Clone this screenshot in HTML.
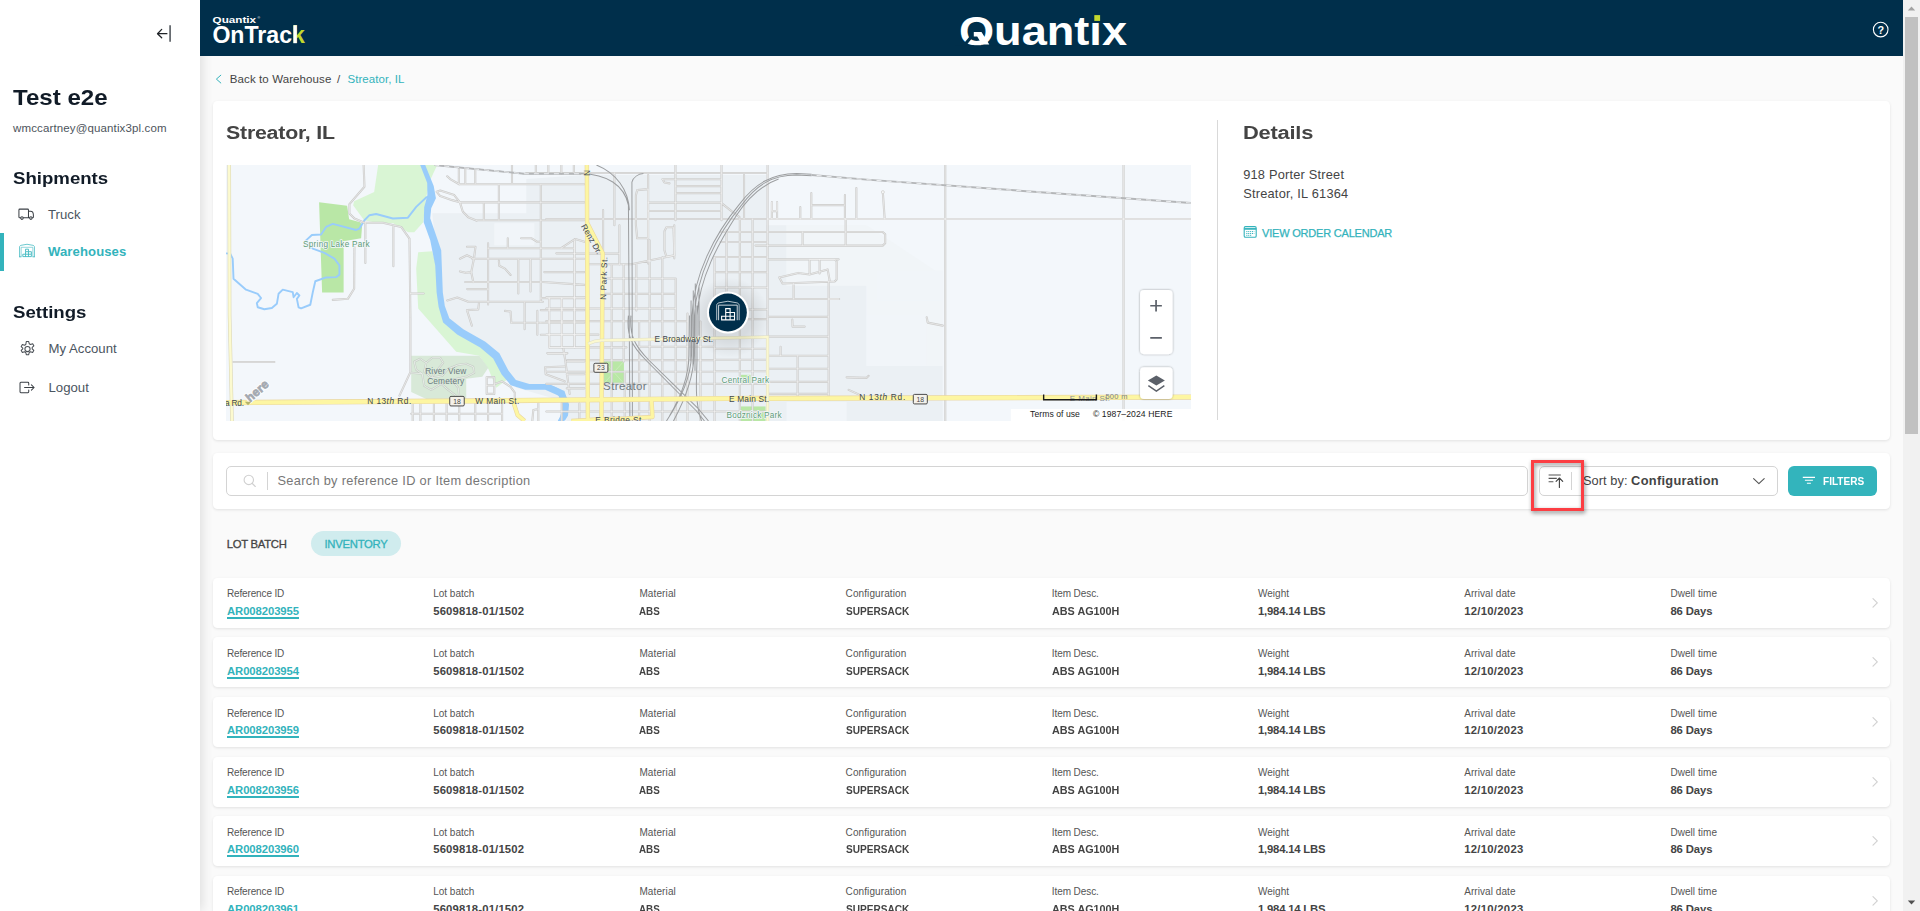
<!DOCTYPE html>
<html lang="en">
<head>
<meta charset="utf-8">
<title>Quantix OnTrack - Streator, IL</title>
<style>
*{box-sizing:border-box;margin:0;padding:0}
html,body{width:1920px;height:911px;overflow:hidden;background:#fafafa}
body{position:relative;font-family:"Liberation Sans",sans-serif;color:#444;font-size:11.2px}
.abs{position:absolute;white-space:nowrap;line-height:1}
a{color:inherit}
/* sidebar */
#side{position:absolute;left:0;top:0;width:200px;height:911px;background:#fff;box-shadow:2px 0 11px rgba(0,0,0,.12);z-index:5}
.h{font-weight:700;color:#111b27;letter-spacing:-.2px}
.nav{color:#4b5560;font-size:13.2px}
/* header */
#top{position:absolute;left:200px;top:0;width:1703px;height:56px;background:#002f4b;z-index:6}
/* scrollbar */
#sb{position:absolute;left:1903px;top:0;width:17px;height:911px;background:#f1f1f1;z-index:6}
#sb .thumb{position:absolute;left:2px;top:17px;width:13px;height:417px;background:#c1c1c1}
.card{position:absolute;background:#fff;border-radius:4.500px;box-shadow:0 1px 3px rgba(0,0,0,.10)}
.t{font-weight:700;color:#444;font-size:19.2px;letter-spacing:-.2px}
.teal{color:#33b3bc}
/* rows */
.row{position:absolute;left:213px;width:1677px;height:50px;background:#fff;border-radius:4.500px;box-shadow:0 1px 3px rgba(0,0,0,.10)}
.row .l{position:absolute;top:10.8px;font-size:10px;color:#555;white-space:nowrap;line-height:12px;letter-spacing:-.15px}
.row .v{position:absolute;top:26.4px;font-size:11.3px;font-weight:700;color:#444;white-space:nowrap;line-height:14px}
.row .v.k{color:#33b3bc;text-decoration:underline;text-decoration-thickness:1.6px;text-underline-offset:1.5px}
.row svg{position:absolute;left:1657px;top:18px}

.row .l.c0{letter-spacing:-.15px}.row .l.c1{letter-spacing:0}.row .l.c2{letter-spacing:.12px}.row .l.c3{letter-spacing:.1px}.row .l.c4{letter-spacing:-.08px}.row .l.c5{letter-spacing:.02px}.row .l.c6{letter-spacing:.07px}.row .l.c7{letter-spacing:.05px}
.row .v{transform-origin:0 0}
.row .v.c0{letter-spacing:-.08px}.row .v.c1{letter-spacing:.16px}.row .v.c2{transform:scaleX(.87)}.row .v.c3{transform:scaleX(.894)}.row .v.c4{transform:scaleX(.956)}.row .v.c5{letter-spacing:-.2px}.row .v.c6{letter-spacing:.28px}.row .v.c7{letter-spacing:-.1px}
</style>
</head>
<body>
<div id="side">
<svg class="abs" style="left:155px;top:24px" width="18" height="20" viewBox="0 0 18 20"><path d="M11.9 9.7H2.6M6.7 5.4L2.5 9.7l4.2 4.1" fill="none" stroke="#1f2327" stroke-width="1.25" stroke-linecap="round" stroke-linejoin="round"/><path d="M15.1 1.3v16.5" stroke="#676c71" stroke-width="1.8"/></svg>
<div class="abs h" id="s_name" style="left:13px;top:87px;font-size:21.6px;letter-spacing:0;transform-origin:0 0;transform:scaleX(1.115)">Test e2e</div>
<div class="abs" id="s_mail" style="left:13px;top:122.5px;font-size:11.5px;color:#4d545c;letter-spacing:.13px">wmccartney@quantix3pl.com</div>
<div class="abs h" id="s_ship" style="left:13px;top:169.800px;font-size:16.2px;letter-spacing:0;transform-origin:0 0;transform:scaleX(1.15)">Shipments</div>
<svg class="abs" style="left:18.300px;top:207.700px" width="16.700" height="13" viewBox="0 0 18 14"><path d="M3 10.6H1.9a.9.9 0 0 1-.9-.9V2.1a.9.9 0 0 1 .9-.9h8.5a.9.9 0 0 1 .9.9v8.5H5.6M11.3 3.4h2.2c1.800 0 3.100 2 3.100 4.200v2.100a.9.9 0 0 1-.9.900h-.6M11.300 10.600h1.300" fill="none" stroke="#3a3f45" stroke-width="1.1" stroke-linecap="round" stroke-linejoin="round"/><circle cx="4.300" cy="10.900" r="1.350" fill="#fff" stroke="#3a3f45" stroke-width="1.100"/><circle cx="13.900" cy="10.900" r="1.350" fill="#fff" stroke="#3a3f45" stroke-width="1.100"/></svg>
<div class="abs nav" id="s_truck" style="left:48px;top:207.500px">Truck</div>
<div class="abs" style="left:0;top:233px;width:4px;height:38px;background:#33b3bc"></div>
<svg class="abs" style="left:17px;top:242px" width="20" height="18" viewBox="0 0 20 18"><g fill="none" stroke="#3fb8c0" transform="translate(10,9.700) scale(.665)"><path d="M-11.200 7.700V-7c0-1.500 1-2.300 2.300-2.600L0-11.200l8.900 1.600c1.300.3 2.300 1.100 2.300 2.600V7.700" stroke-width="1.350" stroke-opacity=".85"/><path d="M-8.800 7.700V-6.600h17.600v14.300" stroke-width="1.200" stroke-opacity=".7"/><path d="M-2.200-3.800h4.400v3.800h-4.400zM-2.200 0v3.800M2.200 0h4.400v3.800M2.200 0v7.400M-6.300 7.400v-3.600h12.900v3.600zM-2.200 3.800v3.600" stroke-width="1.350"/><path d="M-12 7.700h3.600M8.400 7.700h3.600" stroke-width="1.350"/></g></svg>
<div class="abs" id="s_wh" style="left:48px;top:244.500px;font-size:13.1px;font-weight:700;color:#33b3bc;letter-spacing:.1px">Warehouses</div>
<div class="abs h" id="s_set" style="left:13px;top:303.5px;font-size:16.2px;letter-spacing:0;transform-origin:0 0;transform:scaleX(1.15)">Settings</div>
<svg class="abs" style="left:19px;top:340px" width="17" height="18" viewBox="0 0 17 18"><g fill="none" stroke="#4a4f55" stroke-width="1.050" stroke-linejoin="round"><circle cx="8.500" cy="9" r="2.600"/><path d="M7.300 1.500h2.400l.5 2.200 1.300.75 2.150-.7 1.200 2.100-1.650 1.500v1.500l1.650 1.500-1.200 2.100-2.150-.7-1.300.75-.5 2.200H7.300l-.5-2.200-1.300-.75-2.150.7-1.200-2.100 1.650-1.500V8.150L2.150 6.650l1.200-2.100 2.150.7 1.300-.75z"/></g></svg>
<div class="abs nav" id="s_acct" style="left:48.500px;top:341.500px">My Account</div>
<svg class="abs" style="left:18.500px;top:380.600px" width="16.700" height="13" viewBox="0 0 18 14"><g fill="none" stroke="#3a3f45" stroke-width="1.100" stroke-linecap="round" stroke-linejoin="round"><path d="M10.500 4.200V2.300a.9.900 0 0 0-.9-.9H2a.900.900 0 0 0-.9.900v9.400a.900.900 0 0 0 .9.900h7.600a.900.900 0 0 0 .9-.9V9.800"/><path d="M6 7h10.300M13.400 4.100L16.300 7l-2.900 2.900"/></g></svg>
<div class="abs nav" id="s_out" style="left:48.500px;top:380.500px">Logout</div>
</div>
<div id="top">
<svg class="abs" style="left:0;top:0" width="1703" height="56" viewBox="200 0 1703 56" font-family="Liberation Sans, sans-serif" font-weight="700" fill="#fff">
<text x="212.600" y="23.100" font-size="9.800" textLength="43.500" lengthAdjust="spacingAndGlyphs">Quantix</text>
<text x="257.600" y="18.500" font-size="3.500" font-weight="400">®</text>
<text x="212.400" y="43.100" font-size="23.300" textLength="92.500" lengthAdjust="spacingAndGlyphs">OnTrac<tspan fill="#c3d82e">k</tspan></text>
<rect x="293.300" y="25.200" width="3.500" height="18" fill="#fff"/>
<text x="959" y="44.500" font-size="40.500" textLength="168" lengthAdjust="spacingAndGlyphs">Quantix</text>
<rect x="955" y="45.200" width="50" height="10" fill="#002f4b"/>
<path d="M971.500 36.500l-9 11" stroke="#002f4b" stroke-width="3"/><path d="M973.800 32h7.700l7.800 12.500h-7.300l-4.800-8h-3.400z" fill="#fff"/>
<rect x="1091.200" y="13.500" width="10.500" height="8.800" fill="#002f4b"/>
<rect x="1094.300" y="15.100" width="5.800" height="5.800" fill="#c3d82e"/>
<circle cx="1880.700" cy="29.600" r="7.300" fill="none" stroke="#fff" stroke-width="1.100"/>
<text x="1877.600" y="33.600" font-size="10.800" fill="#fff">?</text>
</svg>
</div>
<div id="main">
<svg class="abs" style="left:214px;top:73px" width="10" height="12" viewBox="0 0 10 12"><path d="M6.800 2.200L2.400 6.100l4.400 3.900" fill="none" stroke="#33b3bc" stroke-width="1" stroke-linecap="round" stroke-linejoin="round"/></svg>
<div class="abs" id="bc1" style="left:229.800px;top:73.600px;font-size:11.500px;color:#444;letter-spacing:.1px">Back to Warehouse</div>
<div class="abs" id="bc2" style="left:337px;top:73.600px;font-size:11.500px;color:#444">/</div>
<div class="abs teal" id="bc3" style="left:347.500px;top:73.600px;font-size:11.500px;letter-spacing:.05px">Streator, IL</div>

<div class="card" style="left:213px;top:101px;width:1677px;height:338.500px"></div>
<div class="abs t" id="t1" style="left:226px;top:123px;transform-origin:0 0;transform:scaleX(1.112)">Streator, IL</div>
<div id="map" style="position:absolute;left:226px;top:165px;width:965px;height:256px;background:#f3f7fb;overflow:hidden">
<!--MAPSTART--><svg width="965" height="256" viewBox="0 0 964 255" preserveAspectRatio="none" style="position:absolute;left:0;top:0" font-family="Liberation Sans, sans-serif">
<rect width="964" height="255" fill="#f3f7fb"/>
<path d="M206 48 L300 48 L300 14 L358 10 L540 10 L540 60 L560 60 L560 120 L640 120 L640 200 L716 200 L716 255 L340 255 L340 236 L290 222 L272 196 L222 158 L214 120Z" fill="#ebf0f4"/>
<path d="M541 60 L640 60 L716 110 L716 200 L640 200 L640 120 L560 120 L560 60Z" fill="#f1f5f8"/>
<rect x="268" y="58" width="40" height="22" fill="#f1f5f9"/>
<rect x="640" y="150" width="60" height="50" fill="#f1f5f9"/>
<rect x="560" y="236" width="60" height="19" fill="#f1f5f9"/>
<rect x="650" y="105" width="66" height="30" fill="#f1f5f9"/>
<path d="M152 0 L148 27 L128 36 L127 40 L138 55 L150 57.5 L167 58 L182 67 L188 67 L197 57 L200 32 L204 15 L211 0Z" fill="#d9f5d4"/>
<path d="M192 87 L206 86 L212 108 L214 130 L221 157 L236 168 L258 181 L271 191 L279 207 L283 212 L270 222 L262 203 L253 190 L230 186 L192 143 L190 103Z" fill="#d9f5d4"/>
<path d="M93 37 L121 40.5 L123 54 L134 57 L136 60 L135 73 L117.5 76 L117.5 127 L96 127Z" fill="#b9e7a6"/>
<path d="M185 190 L253 190 L262 202 L256 211 L240 213 L240 233 L200 233 L185 226Z" fill="#d8e9d8"/>
<rect x="377.5" y="195.5" width="20" height="21.5" fill="#b9e7a6"/>
<rect x="514" y="209" width="10" height="10" fill="#b9e7a6"/>
<rect x="514" y="240.5" width="25" height="14.5" fill="#b9e7a6"/>
<path d="M378 196l19 21M397 196l-19 21" stroke="#cfeec2" stroke-width=".7"/>
<path d="M194 0 L201 18 L201.2 30 L198 42 L197.5 57 L204 75 L209 100 L210.4 127 L212.4 141.5 L216.9 156.8 L230.9 168.8 L253.9 181.8 L266.9 192.8 L275.4 208.8 L284.4 219.3 L298.9 223.8 L318.9 223.8 L332.3 229.9 L335.8 240.4 L334.8 249.4 L331.3 255.4 L338.7 254.5 L341.7 249.5 L342.7 238.5 L338.1 225.1 L322.6 218.1 L303.1 218.1 L289.6 214.1 L282.1 204.6 L273.1 187.6 L259.1 176.1 L237.1 163.6 L223.1 152.6 L218.6 140.5 L216.6 127 L215 85 L204 53 L205 43 L209.7 33 L207.5 21 L199 0Z" fill="#99ccfb"/>
<path d="M320 219.500c8 0 20 5 21.500 17 .8 7-1 13-4 18.500h-6c3-5 4.500-11 4-17-1-9-8-14-15.500-14.500z" fill="#99ccfb"/>
<path d="M200.8 31.7 L190 41.7 L181.7 52.5 L166.7 53.3 L150 48.8 L143.3 50 L138.3 55 L133.3 63.3 L130 64.7 L106.7 58.7 L100 61.7 L95 69.2 L85.8 69.7 L79.7 75.3 L86.7 83.3 L98.3 87.5 L108.3 93.3 L113.3 100 L113.3 109.2 L110 111.7 L100 112 L89.2 115.8 L86.7 126.7 L84.2 139.2 L75 142.8 L72.5 141.7 L70.8 133.3 L73.3 130 L70.8 127.5 L67.5 131.7 L66.7 126.7 L56.7 124.2 L52.5 128.3 L50.8 138.3 L45.8 142.5 L38.3 143.7 L31.7 141.7 L30.8 137.5 L35 132.5 L31.7 128.3 L20 124.2 L7.5 113.3 L6.7 93.3 L4.2 88.3 L0 88" fill="none" stroke="#99ccfb" stroke-width="1.900" stroke-linejoin="round"/>
<path d="M137.5 0 L138.3 21.7 L123.3 39 L123.3 48.3 L128.3 53.3 L138.3 57.5 L156.7 57.5 L175 61.7 L183.3 73.3 L184.2 152 L184.2 206.3 L173.3 229.7 M139.2 57.5 L139.2 97.5 M167.2 60.8 L167.2 100.8 M128.3 81.7 L128 123.3 L121.7 133.3 L106.7 134.3 M184.2 128 L197.5 128 M7.5 196.3 L48.3 196.3 M233 19.2 L358 19.2 M233.7 37.2 L358 37.2 M250.6 55 L358 55 M261.8 82.9 L347.5 82.9 M246 93.4 L358 93.4 M318 106.7 L358 106.7 M239 116.6 L316.6 116.6 L358 119.4 M241 123.6 L262 123.6 M232.6 4 L232.6 18.5 M239 4 L239 18.5 M249 4 L249 18.5 M285.7 0 L285.7 18.5 M309.5 0 L309.5 8.5 M322 0 L322 8.5 M335 0 L335 8.5 M347.5 0 L347.5 8.5 M272.6 19.7 L272.6 54.8 M257.6 38 L257.6 54.8 M314.5 19.7 L314.5 136.2 M261.8 78 L261.8 139 M292 94 L292 128 M304.2 94 L304.2 126 M348.2 76 L348.2 182 M221 11.2 L224 14 L233 19.2 M210.5 26.7 L214 25.5 L228 30 L233.7 37.2 L226 35 L214 31 L210.5 26.7 M233.7 37.2 L236.5 46.3 L242 52 L250.6 55.5 M281.5 73 L281.5 82.9 M294.8 73 L305.3 73 L311 76.5 L314.5 76.5 M334.8 82.9 L348.9 73.7 L358 76.5 M330 88 L348.2 88 M240.7 81.5 L249.2 81.5 L247.8 92.7 L245 106.7 L247 116.6 M233.7 93.4 L240.7 89.9 L246.3 92.7 M233.7 106 L239.3 107.4 L245 106.7 M272.6 95.5 L273 100.4 L278.7 103.2 L284.3 109.5 M221 135 L231 132 L242 136.2 L316.6 136.2 M322.9 132.6 L322.9 182 M335.5 132.6 L335.5 182 M314.5 132.6 L358 132.6 M314.5 144.6 L358 144.6 M314.5 157.2 L358 157.2 M314.5 169.1 L358 169.1 M324 181.8 L358 181.8 M311 145.3 L311 169.1 M298.3 136.8 L298.3 163.5 M285 157.2 L314.5 157.2 M278.7 145.3 L284.3 146 L285 157.2 M240.7 144.6 L252 143.9 L252.7 137.5 M240.7 144.6 L245.6 160 M321.5 188 L340.4 188 M337 183 L339 195 L343.3 228 M340.4 195.8 L358 195.8 M340.4 208.5 L358 208.5 M340.4 222.5 L358 222.5 M338.3 200.7 L318.7 201.4 L319.4 208.5 L338.3 215.5 M260.4 211.3 L268 211.3 L268 228 L260.4 228 L260.4 211.3 M260.4 219.5 L268 219.5 M268 218.3 L275.8 215.5 L284.3 221 L288.5 226.7 L288.5 233 M185 247.8 L275.8 247.8 M186.5 237.5 L186.5 255 M194.2 237.5 L194.2 255 M207.7 237.5 L207.7 255 M220.4 237.5 L220.4 255 M233 237.5 L233 255 M249 237.5 L249 255 M261.8 237.5 L261.8 255 M275.8 237.5 L275.8 255 M312 237.5 L312 255 M353 237.5 L353 255 M306 255 L307 244 L312 243 M348 88.3 L393 88.3 M320 131.9 L359 131.9 M320 142.9 L449 142.9 M320 155.5 L461 155.5 M320 169 L372 169 M322.8 181.7 L400 181.7 M321 187.4 L341 187.4 M341 194.4 L487 194.4 M320 206 L487 206 M320 218 L487 218 M320 245.5 L487 245.5 M412 181 L487 181 M322.8 132.6 L322.8 181.7 M335.4 132.6 L335.4 182 M348 75 L348 181.7 M335.4 237 L335.4 255 M363 98.9 L405 98.9 L446 90.4 M379 113 L448 113 M379 128.4 L449 128.4 M385.3 100 L385.3 255 M397.2 99 L397.2 196 M409.9 99 L409.9 145 M412.7 155.5 L412.7 255 M423.2 75 L423.2 255 M435.9 92 L435.9 255 M449.2 113 L449.2 255 M447.8 60 L447.8 93 M461 148 L461 255 M393 60 L393 99 M398.3 206 L398.3 255 M474 156 L474 255 M300 8 L541 8 M320 53.8 L964 53.8 M388 8 L388 60 M376.7 45 L376.7 88 M421.7 10 L421.7 98 M449 0 L449 55 M410.8 25 L421.7 24 L421.7 73 L410.8 73 L409.5 60 L409.5 30 L410.8 25 M421.7 37.5 L495 37.5 M421.7 45.8 L495 45.8 M449 28 L495 28 M449 21 L495 21 M436 14.2 L495 14.2 M495 0 L495 55 M436 14.2 L438 17.5 L443 18.3 M440 62 L447 62 L448 90 L440 91.5 L438 85 L438 66 L440 62 M517.5 10 L517.5 53.8 M541 0 L541 255 M513.3 53.8 L513.3 255 M526 53.8 L526 255 M500 65 L500 130 M488 92 L488 255 M494 66.7 L541 66.7 M494 76.7 L541 76.7 M488 91.7 L541 91.7 M488 106.7 L541 106.7 M488 122 L541 122 M488 144 L541 144 M488 153.5 L541 153.5 M488 183 L541 183 M488 194 L541 194 M488 205.5 L541 205.5 M488 218 L541 218 M488 245.5 L541 245.5 M495 38 L505 46 L513 52 M541 53.8 L964 53.8 M545.3 37 L545.3 53.8 M550.5 37 L550.5 53.8 M573.7 42 L573.7 53.8 M584.7 28 L584.7 53.8 M618.3 30 L618.3 53.8 M629.7 23 L629.7 53.8 M545.3 37 L545.3 46 L550.5 46 L550.5 37 M585 40 L617.7 40 M541.7 66.7 L656 66.7 L658.5 69 L658.5 78 L656 80.3 L529 80.3 M576 66.7 L576 80 M619 53.8 L619 80 M541.7 94 L612 94 M552.7 112 L571.7 107.5 L583 109 L583 94 L608 94 L610 96 L610 114 L608 116 L556 118 L552.7 112 M583 109 L601 104 L603 115 M593 94 L593 108 M541.7 133.5 L612 133.5 M567 118 L567 133.5 M602 116 L602 232 M541.7 151.3 L602 151.3 M541.7 171 L602 171 M541.7 190 L602 190 M541.7 203 L602 203 M541.7 216 L602 216 M541.7 228 L602 228 M571 190 L571 231 M565.7 154 L566 161 L578 161 M554 181 L554 190 M620 211.5 L640 212 L642 210 M622 224 L632 228.5 M700 151.7 L701 157 L716 160 M602 133.5 L612.5 133.5 M718.5 0 L718.5 255 M896.6 0 L896.6 255 M656.2 28 L658 53.8" fill="none" stroke="#cbcbca" stroke-width="2.100" stroke-linejoin="round" stroke-linecap="round"/>
<path d="M137.5 0 L138.3 21.7 L123.3 39 L123.3 48.3 L128.3 53.3 L138.3 57.5 L156.7 57.5 L175 61.7 L183.3 73.3 L184.2 152 L184.2 206.3 L173.3 229.7 M139.2 57.5 L139.2 97.5 M167.2 60.8 L167.2 100.8 M128.3 81.7 L128 123.3 L121.7 133.3 L106.7 134.3 M184.2 128 L197.5 128 M7.5 196.3 L48.3 196.3 M233 19.2 L358 19.2 M233.7 37.2 L358 37.2 M250.6 55 L358 55 M261.8 82.9 L347.5 82.9 M246 93.4 L358 93.4 M318 106.7 L358 106.7 M239 116.6 L316.6 116.6 L358 119.4 M241 123.6 L262 123.6 M232.6 4 L232.6 18.5 M239 4 L239 18.5 M249 4 L249 18.5 M285.7 0 L285.7 18.5 M309.5 0 L309.5 8.5 M322 0 L322 8.5 M335 0 L335 8.5 M347.5 0 L347.5 8.5 M272.6 19.7 L272.6 54.8 M257.6 38 L257.6 54.8 M314.5 19.7 L314.5 136.2 M261.8 78 L261.8 139 M292 94 L292 128 M304.2 94 L304.2 126 M348.2 76 L348.2 182 M221 11.2 L224 14 L233 19.2 M210.5 26.7 L214 25.5 L228 30 L233.7 37.2 L226 35 L214 31 L210.5 26.7 M233.7 37.2 L236.5 46.3 L242 52 L250.6 55.5 M281.5 73 L281.5 82.9 M294.8 73 L305.3 73 L311 76.5 L314.5 76.5 M334.8 82.9 L348.9 73.7 L358 76.5 M330 88 L348.2 88 M240.7 81.5 L249.2 81.5 L247.8 92.7 L245 106.7 L247 116.6 M233.7 93.4 L240.7 89.9 L246.3 92.7 M233.7 106 L239.3 107.4 L245 106.7 M272.6 95.5 L273 100.4 L278.7 103.2 L284.3 109.5 M221 135 L231 132 L242 136.2 L316.6 136.2 M322.9 132.6 L322.9 182 M335.5 132.6 L335.5 182 M314.5 132.6 L358 132.6 M314.5 144.6 L358 144.6 M314.5 157.2 L358 157.2 M314.5 169.1 L358 169.1 M324 181.8 L358 181.8 M311 145.3 L311 169.1 M298.3 136.8 L298.3 163.5 M285 157.2 L314.5 157.2 M278.7 145.3 L284.3 146 L285 157.2 M240.7 144.6 L252 143.9 L252.7 137.5 M240.7 144.6 L245.6 160 M321.5 188 L340.4 188 M337 183 L339 195 L343.3 228 M340.4 195.8 L358 195.8 M340.4 208.5 L358 208.5 M340.4 222.5 L358 222.5 M338.3 200.7 L318.7 201.4 L319.4 208.5 L338.3 215.5 M260.4 211.3 L268 211.3 L268 228 L260.4 228 L260.4 211.3 M260.4 219.5 L268 219.5 M268 218.3 L275.8 215.5 L284.3 221 L288.5 226.7 L288.5 233 M185 247.8 L275.8 247.8 M186.5 237.5 L186.5 255 M194.2 237.5 L194.2 255 M207.7 237.5 L207.7 255 M220.4 237.5 L220.4 255 M233 237.5 L233 255 M249 237.5 L249 255 M261.8 237.5 L261.8 255 M275.8 237.5 L275.8 255 M312 237.5 L312 255 M353 237.5 L353 255 M306 255 L307 244 L312 243 M348 88.3 L393 88.3 M320 131.9 L359 131.9 M320 142.9 L449 142.9 M320 155.5 L461 155.5 M320 169 L372 169 M322.8 181.7 L400 181.7 M321 187.4 L341 187.4 M341 194.4 L487 194.4 M320 206 L487 206 M320 218 L487 218 M320 245.5 L487 245.5 M412 181 L487 181 M322.8 132.6 L322.8 181.7 M335.4 132.6 L335.4 182 M348 75 L348 181.7 M335.4 237 L335.4 255 M363 98.9 L405 98.9 L446 90.4 M379 113 L448 113 M379 128.4 L449 128.4 M385.3 100 L385.3 255 M397.2 99 L397.2 196 M409.9 99 L409.9 145 M412.7 155.5 L412.7 255 M423.2 75 L423.2 255 M435.9 92 L435.9 255 M449.2 113 L449.2 255 M447.8 60 L447.8 93 M461 148 L461 255 M393 60 L393 99 M398.3 206 L398.3 255 M474 156 L474 255 M300 8 L541 8 M320 53.8 L964 53.8 M388 8 L388 60 M376.7 45 L376.7 88 M421.7 10 L421.7 98 M449 0 L449 55 M410.8 25 L421.7 24 L421.7 73 L410.8 73 L409.5 60 L409.5 30 L410.8 25 M421.7 37.5 L495 37.5 M421.7 45.8 L495 45.8 M449 28 L495 28 M449 21 L495 21 M436 14.2 L495 14.2 M495 0 L495 55 M436 14.2 L438 17.5 L443 18.3 M440 62 L447 62 L448 90 L440 91.5 L438 85 L438 66 L440 62 M517.5 10 L517.5 53.8 M541 0 L541 255 M513.3 53.8 L513.3 255 M526 53.8 L526 255 M500 65 L500 130 M488 92 L488 255 M494 66.7 L541 66.7 M494 76.7 L541 76.7 M488 91.7 L541 91.7 M488 106.7 L541 106.7 M488 122 L541 122 M488 144 L541 144 M488 153.5 L541 153.5 M488 183 L541 183 M488 194 L541 194 M488 205.5 L541 205.5 M488 218 L541 218 M488 245.5 L541 245.5 M495 38 L505 46 L513 52 M541 53.8 L964 53.8 M545.3 37 L545.3 53.8 M550.5 37 L550.5 53.8 M573.7 42 L573.7 53.8 M584.7 28 L584.7 53.8 M618.3 30 L618.3 53.8 M629.7 23 L629.7 53.8 M545.3 37 L545.3 46 L550.5 46 L550.5 37 M585 40 L617.7 40 M541.7 66.7 L656 66.7 L658.5 69 L658.5 78 L656 80.3 L529 80.3 M576 66.7 L576 80 M619 53.8 L619 80 M541.7 94 L612 94 M552.7 112 L571.7 107.5 L583 109 L583 94 L608 94 L610 96 L610 114 L608 116 L556 118 L552.7 112 M583 109 L601 104 L603 115 M593 94 L593 108 M541.7 133.5 L612 133.5 M567 118 L567 133.5 M602 116 L602 232 M541.7 151.3 L602 151.3 M541.7 171 L602 171 M541.7 190 L602 190 M541.7 203 L602 203 M541.7 216 L602 216 M541.7 228 L602 228 M571 190 L571 231 M565.7 154 L566 161 L578 161 M554 181 L554 190 M620 211.5 L640 212 L642 210 M622 224 L632 228.5 M700 151.7 L701 157 L716 160 M602 133.5 L612.5 133.5 M718.5 0 L718.5 255 M896.6 0 L896.6 255 M656.2 28 L658 53.8" fill="none" stroke="#f7f7f7" stroke-width=".600" stroke-linejoin="round" stroke-linecap="round"/>
<path d="M196 208 L190 204 L188 196 L194 193 L200 197 L198 206 L205 212 L216 210 L222 203 L232 199 L240 198 L247 201 L248 207 L240 211 L226 214 L215 218 L205 224 L198 220 L196 208 M200 197 L206 192 L214 192 L217 197 L212 203 L205 212 M215 218 L222 224 L230 230 L238 231 M226 214 L232 222 L233 231 M185 207 L196 208" fill="none" stroke="#c6cec6" stroke-width="2" stroke-linejoin="round"/>
<path d="M196 208 L190 204 L188 196 L194 193 L200 197 L198 206 L205 212 L216 210 L222 203 L232 199 L240 198 L247 201 L248 207 L240 211 L226 214 L215 218 L205 224 L198 220 L196 208 M200 197 L206 192 L214 192 L217 197 L212 203 L205 212 M215 218 L222 224 L230 230 L238 231 M226 214 L232 222 L233 231 M185 207 L196 208" fill="none" stroke="#eef3ee" stroke-width=".800" stroke-linejoin="round"/>
<path d="M208 0L298 8.700 355 8.700C380 9 398 20 402 40L403.500 255 M370 0C390 8 402 25 403 45 M405.500 17C407 12 412 9 417 8.500M405.500 17L406 255 M585 10.800L570 10C545 10 530 20 515 40 490 70 470 110 468 150L467.500 190C467 215 455 240 447 255 M585 9.300L570 8.500C545 8.500 528 19 513 39 488 69 467 110 465.500 150L465 190C464 215 450 240 440 255 M470.500 140L470.500 195C470 215 468 235 475 255 M552 14C535 20 522 32 510 50 492 78 473 112 470.500 150 M463 150L462.500 190C462 212 452 235 443 250 M468.800 118L468.500 205 M466.800 125L466.500 200 M464.600 135L464.300 195 M472.500 120L472.500 170 M402 150C400 170 405 180 420 195L470 245 478 255 M404.500 150C403 170 408 180 423 195L472 243 482 255" fill="none" stroke="#9c9ea0" stroke-width="1"/>
<circle cx="656.200" cy="27" r="1.500" fill="#f6f7f7" stroke="#d2d2d1" stroke-width=".800"/>
<path d="M964 37.900L640 14.600 585 10" fill="none" stroke="#b4b6b8" stroke-width="1.900"/>
<path d="M964 37.900L640 14.600 585 10" fill="none" stroke="#f3f5f7" stroke-width=".900" stroke-dasharray="5 5"/>
<path d="M208 0L298 8.700 355 8.700" fill="none" stroke="#b4b6b8" stroke-width="1.800"/>
<path d="M208 0L298 8.700 355 8.700" fill="none" stroke="#f3f5f7" stroke-width=".900" stroke-dasharray="5 5"/>
<path d="M0 236.700L250 235 500 232.600 700 232 964 231.200" fill="none" stroke="#ead7a0" stroke-width="5.200" stroke-linejoin="round"/>
<path d="M360.500 0L361.500 255 M360.500 57L376.300 88 375 255 M287 236L291.300 249 298.300 255 M425 233.500L426 251 400 252.500 370 253.500 345 255" fill="none" stroke="#ead7a0" stroke-width="4.400" stroke-linejoin="round"/>
<path d="M3.200 0L3.600 150 6 255" fill="none" stroke="#dcd8b8" stroke-width="3.600"/>
<path d="M3.200 0L3.600 150 6 255" fill="none" stroke="#fcfacf" stroke-width="2.400"/>
<path d="M0 236.700L250 235 500 232.600 700 232 964 231.200" fill="none" stroke="#fdf6a2" stroke-width="4" stroke-linejoin="round"/>
<path d="M360.500 0L361.500 255 M360.500 57L376.300 88 375 255 M287 236L291.300 249 298.300 255 M425 233.500L426 251 400 252.500 370 253.500 345 255" fill="none" stroke="#fdf6a2" stroke-width="3.200" stroke-linejoin="round"/>
<path d="M362 178C366 176 370 175 375 174.700L541 171.300 541 255" fill="none" stroke="#dcdcc8" stroke-width="3.200"/>
<path d="M362 178C366 176 370 175 375 174.700L541 171.300 541 255" fill="none" stroke="#fbf8cf" stroke-width="2.200"/>
<rect x="223.5" y="230.5" width="14.5" height="9.5" rx="1.200" fill="#f4f1ea" stroke="#3a3a3a" stroke-width=".900"/>
<text x="230.8" y="238" font-size="6.800" fill="#444" text-anchor="middle">18</text>
<rect x="367.5" y="197.5" width="14" height="9" rx="1.200" fill="#f4f1ea" stroke="#3a3a3a" stroke-width=".900"/>
<text x="374.5" y="204.5" font-size="6.800" fill="#444" text-anchor="middle">23</text>
<rect x="686.6" y="228.5" width="14" height="9.5" rx="1.200" fill="#f4f1ea" stroke="#3a3a3a" stroke-width=".900"/>
<text x="693.6" y="236" font-size="6.800" fill="#444" text-anchor="middle">18</text>
<text x="77" y="81.3" font-size="8.2" fill="#5f9c78" stroke="#f3f7fb" stroke-width="1.600" paint-order="stroke" stroke-linejoin="round" textLength="66.500">Spring Lake Park</text>
<text x="199" y="208" font-size="8.3" fill="#6b7b80" textLength="41">River View</text>
<text x="201" y="218.3" font-size="8.3" fill="#6b7b80" textLength="37">Cemetery</text>
<text x="141" y="238.5" font-size="8.3" fill="#3d4852" textLength="44">N 13<tspan font-style="italic">th</tspan> Rd.</text>
<text x="-1" y="240" font-size="8.3" fill="#3d4852" textLength="19">a Rd.</text>
<text x="249" y="238" font-size="8.3" fill="#3d4852" textLength="44">W Main St.</text>
<text x="376.7" y="224.3" font-size="11.5" fill="#6f7a80" textLength="43.500">Streator</text>
<text x="428" y="176.5" font-size="8.3" fill="#3d4852" textLength="58.500">E Broadway St.</text>
<text x="495" y="217.5" font-size="8.3" fill="#5f9c78" stroke="#f3f7fb" stroke-width="1.600" paint-order="stroke" stroke-linejoin="round" textLength="47.500">Central Park</text>
<text x="502.5" y="236.5" font-size="8.3" fill="#3d4852" textLength="40">E Main St.</text>
<text x="500" y="252" font-size="8.3" fill="#5f9c78" stroke="#f3f7fb" stroke-width="1.600" paint-order="stroke" stroke-linejoin="round" textLength="55">Bodznick Park</text>
<text x="369" y="257.5" font-size="8.3" fill="#3d4852" textLength="48.500">E Bridge St.</text>
<text x="632.5" y="234.5" font-size="8.3" fill="#3d4852" textLength="46">N 13<tspan font-style="italic">th</tspan> Rd.</text>
<text x="843" y="235" font-size="8" fill="#8a9096" textLength="40">E Main St.</text>
<text transform="translate(379.500,134.500) rotate(-88)" font-size="8.300" fill="#3d4852" textLength="43">N Park St.</text>
<text transform="translate(354.500,61) rotate(60)" font-size="8.300" fill="#3d4852" textLength="33">Renz Dr.</text>
<text transform="translate(364,11) rotate(-90)" font-size="8.300" fill="#3d4852">N</text>
<g transform="translate(24,236.500) rotate(-41)" font-size="12" font-weight="700" letter-spacing=".2"><text fill="#fbfcfd" stroke="#fbfcfd" stroke-width="3" stroke-linejoin="round">here</text><text fill="#a4a9b0" stroke="#a4a9b0" stroke-width=".700">here</text></g>
<path d="M18.800 235.800h6.400l-3.200 3.600z" fill="#b5b26c"/>
<path d="M816.800 228.500v5.300h52.700v-5.300" fill="none" stroke="#1a1a1a" stroke-width="1.400"/>
<text x="878.5" y="233" font-size="7.5" fill="#7a8087" textLength="22">500 m</text>
<rect x="784" y="243" width="180" height="12" fill="#ffffff" fill-opacity=".93"/>
<text x="803.3" y="251.5" font-size="8.6" fill="#1c1c1c" textLength="49.700">Terms of use</text>
<text x="866" y="251.5" font-size="8.6" fill="#1c1c1c" textLength="79.400">© 1987–2024 HERE</text>
<defs><radialGradient id="mg"><stop offset=".55" stop-color="#000" stop-opacity=".09"/><stop offset="1" stop-color="#000" stop-opacity="0"/></radialGradient></defs>
<circle cx="503" cy="152" r="40" fill="url(#mg)"/>
<circle cx="501.400" cy="146.900" r="21" fill="#fff"/><circle cx="501.400" cy="146.900" r="18.900" fill="#002f4b"/>
<g fill="none" stroke="#fff" transform="translate(501.400,146.900)"><path d="M-11.200 7.700V-7c0-1.500 1-2.300 2.300-2.600L0-11.200l8.900 1.600c1.300.3 2.300 1.100 2.300 2.600V7.700" stroke-width=".9" stroke-opacity=".8"/><path d="M-9.300 7.700V-7.300h18.600v15" stroke-width=".9" stroke-opacity=".9"/><path d="M-2.200-3.800h4.400v3.800h-4.400zM-2.200 0v3.800M2.200 0h4.400v3.800M2.200 0v7.400M-6.300 7.400v-3.600h12.900v3.600zM-2.200 3.800v3.600" stroke-width="1.100"/></g>
<g filter="url(#sh)"><rect x="913.100" y="124.400" width="32.500" height="64" rx="4" fill="#fff"/><rect x="913.100" y="201.500" width="32.500" height="31.600" rx="4" fill="#fff"/></g>
<defs><filter id="sh" x="-20%" y="-20%" width="140%" height="140%"><feDropShadow dx="0" dy="0" stdDeviation="1" flood-color="#000" flood-opacity=".38"/></filter></defs>
<path d="M923.300 140.200h11.600M929.100 134.400v11.600M923.300 172.200h11.600" stroke="#5b6069" stroke-width="1.700" fill="none"/>
<path d="M929.400 209.600l8.500 5-8.500 5-8.500-5z" fill="#5b6069"/><path d="M921.400 219.800l8 5.400 8-5.400" fill="none" stroke="#5b6069" stroke-width="1.500"/>
</svg><!--MAPEND-->
</div>
<div class="abs" style="left:1217px;top:120px;width:1px;height:300px;background:#d9d9d9"></div>
<div class="abs t" id="t2" style="left:1243.300px;top:122.600px;transform-origin:0 0;transform:scaleX(1.14)">Details</div>
<div class="abs" id="ad1" style="left:1243.200px;top:168.800px;font-size:12.800px;color:#444;letter-spacing:.21px">918 Porter Street</div>
<div class="abs" id="ad2" style="left:1243.200px;top:188px;font-size:12.800px;color:#444;letter-spacing:.22px">Streator, IL 61364</div>
<svg class="abs" style="left:1243px;top:225px" width="15" height="14" viewBox="0 0 15 14"><g fill="none" stroke="#33b3bc"><rect x="1.200" y="1.600" width="12" height="10.600" rx="1.300" stroke-width="1.100"/><path d="M1.200 3.900h12" stroke-width="1.700"/><path d="M3.300 6.600h8M3.300 8.500h8M3.300 10.300h5" stroke-width="1" stroke-dasharray="1.100 .8"/></g></svg>
<div class="abs teal" id="voc" style="-webkit-text-stroke:.25px #33b3bc;left:1262px;top:228.300px;font-size:11px;letter-spacing:-.2px">VIEW ORDER CALENDAR</div>

<div class="card" style="left:213px;top:453px;width:1677px;height:56px"></div>
<div class="abs" style="left:226px;top:466px;width:1302px;height:29.500px;border:1px solid #d4d4d4;border-radius:5px;background:#fff"></div>
<svg class="abs" style="left:242px;top:473px" width="16" height="16" viewBox="0 0 16 16"><circle cx="6.800" cy="6.900" r="4.700" fill="none" stroke="#d0d0d0" stroke-width="1.100"/><path d="M10.300 10.500l3 3" stroke="#d0d0d0" stroke-width="1.100" stroke-linecap="round"/></svg>
<div class="abs" style="left:267px;top:472px;width:1px;height:18px;background:#d4d4d4"></div>
<div class="abs" id="ph" style="left:277.500px;top:474.600px;font-size:12.800px;color:#777;letter-spacing:.3px">Search by reference ID or Item description</div>

<div class="abs" style="left:1538.500px;top:466px;width:239.300px;height:29.500px;border:1px solid #d4d4d4;border-radius:5px;background:#fff"></div>
<svg class="abs" style="left:1546.600px;top:472.200px" width="20" height="18" viewBox="0 0 20 18"><path d="M1.600 3h12.200M1.600 6.300h8.200M1.600 9.700h4.800" stroke="#555" stroke-width="1.150" fill="none"/><path d="M12.400 15.400V6.200M9.100 9.300l3.300-3.300 3.300 3.300" stroke="#444" stroke-width="1.150" fill="none" stroke-linecap="round" stroke-linejoin="round"/></svg>
<div class="abs" style="left:1571px;top:472px;width:1px;height:18px;background:#d4d4d4"></div>
<div class="abs" id="sort" style="left:1583px;top:475px;font-size:12.800px;color:#444;letter-spacing:.05px">Sort by: <b id="sortb" style="letter-spacing:.3px">Configuration</b></div>
<svg class="abs" style="left:1751px;top:475px" width="16" height="12" viewBox="0 0 16 12"><path d="M2.600 3.600l5.300 5 5.300-5" fill="none" stroke="#555" stroke-width="1.100" stroke-linecap="round" stroke-linejoin="round"/></svg>

<div class="abs" style="left:1788px;top:466px;width:89px;height:29.700px;border-radius:6px;background:#33b4bc"></div>
<svg class="abs" style="left:1801px;top:474px" width="16" height="13" viewBox="0 0 16 13"><path d="M1.800 3.400h12.200M3.900 6.300h8M5.900 9.300h4" stroke="#fff" stroke-width="1.100" fill="none"/></svg>
<div class="abs" id="fil" style="left:1822.800px;top:475.800px;font-size:11.300px;font-weight:700;color:#fff;transform-origin:0 0;transform:scaleX(.89)">FILTERS</div>

<div class="abs" style="left:1531px;top:460px;width:52.800px;height:51px;border:3px solid #fc3e43;filter:drop-shadow(1.500px 2.500px 2.100px rgba(0,0,0,.46))"></div>

<div class="abs" id="tab1" style="-webkit-text-stroke:.3px #444;left:226.700px;top:538.600px;font-size:11.300px;color:#444;letter-spacing:-.28px">LOT BATCH</div>
<div class="abs" style="left:311px;top:531px;width:90px;height:25px;border-radius:12.500px;background:#d0ecee"></div>
<div class="abs teal" id="tab2" style="-webkit-text-stroke:.3px #33b3bc;left:324.500px;top:538.600px;font-size:11.300px;letter-spacing:-.28px">INVENTORY</div>
</div>
<div class="row" style="top:577.7px"><span class="l c0" style="left:14px">Reference ID</span><a class="v k c0" style="left:14px">AR008203955</a><span class="l c1" style="left:220.2px">Lot batch</span><span class="v c1" style="left:220.2px">5609818-01/1502</span><span class="l c2" style="left:426.4px">Material</span><span class="v c2" style="left:426.4px">ABS</span><span class="l c3" style="left:632.6px">Configuration</span><span class="v c3" style="left:632.6px">SUPERSACK</span><span class="l c4" style="left:838.8px">Item Desc.</span><span class="v c4" style="left:838.8px">ABS AG100H</span><span class="l c5" style="left:1045px">Weight</span><span class="v c5" style="left:1045px">1,984.14 LBS</span><span class="l c6" style="left:1251.2px">Arrival date</span><span class="v c6" style="left:1251.2px">12/10/2023</span><span class="l c7" style="left:1457.4px">Dwell time</span><span class="v c7" style="left:1457.4px">86 Days</span><svg width="10" height="14" viewBox="0 0 10 14"><path d="M3 2.600l4.300 4.300L3 11.200" fill="none" stroke="#d2d2d2" stroke-width="1.200" stroke-linecap="round" stroke-linejoin="round"/></svg></div>
<div class="row" style="top:637.3px"><span class="l c0" style="left:14px">Reference ID</span><a class="v k c0" style="left:14px">AR008203954</a><span class="l c1" style="left:220.2px">Lot batch</span><span class="v c1" style="left:220.2px">5609818-01/1502</span><span class="l c2" style="left:426.4px">Material</span><span class="v c2" style="left:426.4px">ABS</span><span class="l c3" style="left:632.6px">Configuration</span><span class="v c3" style="left:632.6px">SUPERSACK</span><span class="l c4" style="left:838.8px">Item Desc.</span><span class="v c4" style="left:838.8px">ABS AG100H</span><span class="l c5" style="left:1045px">Weight</span><span class="v c5" style="left:1045px">1,984.14 LBS</span><span class="l c6" style="left:1251.2px">Arrival date</span><span class="v c6" style="left:1251.2px">12/10/2023</span><span class="l c7" style="left:1457.4px">Dwell time</span><span class="v c7" style="left:1457.4px">86 Days</span><svg width="10" height="14" viewBox="0 0 10 14"><path d="M3 2.600l4.300 4.300L3 11.200" fill="none" stroke="#d2d2d2" stroke-width="1.200" stroke-linecap="round" stroke-linejoin="round"/></svg></div>
<div class="row" style="top:696.9px"><span class="l c0" style="left:14px">Reference ID</span><a class="v k c0" style="left:14px">AR008203959</a><span class="l c1" style="left:220.2px">Lot batch</span><span class="v c1" style="left:220.2px">5609818-01/1502</span><span class="l c2" style="left:426.4px">Material</span><span class="v c2" style="left:426.4px">ABS</span><span class="l c3" style="left:632.6px">Configuration</span><span class="v c3" style="left:632.6px">SUPERSACK</span><span class="l c4" style="left:838.8px">Item Desc.</span><span class="v c4" style="left:838.8px">ABS AG100H</span><span class="l c5" style="left:1045px">Weight</span><span class="v c5" style="left:1045px">1,984.14 LBS</span><span class="l c6" style="left:1251.2px">Arrival date</span><span class="v c6" style="left:1251.2px">12/10/2023</span><span class="l c7" style="left:1457.4px">Dwell time</span><span class="v c7" style="left:1457.4px">86 Days</span><svg width="10" height="14" viewBox="0 0 10 14"><path d="M3 2.600l4.300 4.300L3 11.200" fill="none" stroke="#d2d2d2" stroke-width="1.200" stroke-linecap="round" stroke-linejoin="round"/></svg></div>
<div class="row" style="top:756.5px"><span class="l c0" style="left:14px">Reference ID</span><a class="v k c0" style="left:14px">AR008203956</a><span class="l c1" style="left:220.2px">Lot batch</span><span class="v c1" style="left:220.2px">5609818-01/1502</span><span class="l c2" style="left:426.4px">Material</span><span class="v c2" style="left:426.4px">ABS</span><span class="l c3" style="left:632.6px">Configuration</span><span class="v c3" style="left:632.6px">SUPERSACK</span><span class="l c4" style="left:838.8px">Item Desc.</span><span class="v c4" style="left:838.8px">ABS AG100H</span><span class="l c5" style="left:1045px">Weight</span><span class="v c5" style="left:1045px">1,984.14 LBS</span><span class="l c6" style="left:1251.2px">Arrival date</span><span class="v c6" style="left:1251.2px">12/10/2023</span><span class="l c7" style="left:1457.4px">Dwell time</span><span class="v c7" style="left:1457.4px">86 Days</span><svg width="10" height="14" viewBox="0 0 10 14"><path d="M3 2.600l4.300 4.300L3 11.200" fill="none" stroke="#d2d2d2" stroke-width="1.200" stroke-linecap="round" stroke-linejoin="round"/></svg></div>
<div class="row" style="top:816.1px"><span class="l c0" style="left:14px">Reference ID</span><a class="v k c0" style="left:14px">AR008203960</a><span class="l c1" style="left:220.2px">Lot batch</span><span class="v c1" style="left:220.2px">5609818-01/1502</span><span class="l c2" style="left:426.4px">Material</span><span class="v c2" style="left:426.4px">ABS</span><span class="l c3" style="left:632.6px">Configuration</span><span class="v c3" style="left:632.6px">SUPERSACK</span><span class="l c4" style="left:838.8px">Item Desc.</span><span class="v c4" style="left:838.8px">ABS AG100H</span><span class="l c5" style="left:1045px">Weight</span><span class="v c5" style="left:1045px">1,984.14 LBS</span><span class="l c6" style="left:1251.2px">Arrival date</span><span class="v c6" style="left:1251.2px">12/10/2023</span><span class="l c7" style="left:1457.4px">Dwell time</span><span class="v c7" style="left:1457.4px">86 Days</span><svg width="10" height="14" viewBox="0 0 10 14"><path d="M3 2.600l4.300 4.300L3 11.200" fill="none" stroke="#d2d2d2" stroke-width="1.200" stroke-linecap="round" stroke-linejoin="round"/></svg></div>
<div class="row" style="top:875.7px"><span class="l c0" style="left:14px">Reference ID</span><a class="v k c0" style="left:14px">AR008203961</a><span class="l c1" style="left:220.2px">Lot batch</span><span class="v c1" style="left:220.2px">5609818-01/1502</span><span class="l c2" style="left:426.4px">Material</span><span class="v c2" style="left:426.4px">ABS</span><span class="l c3" style="left:632.6px">Configuration</span><span class="v c3" style="left:632.6px">SUPERSACK</span><span class="l c4" style="left:838.8px">Item Desc.</span><span class="v c4" style="left:838.8px">ABS AG100H</span><span class="l c5" style="left:1045px">Weight</span><span class="v c5" style="left:1045px">1,984.14 LBS</span><span class="l c6" style="left:1251.2px">Arrival date</span><span class="v c6" style="left:1251.2px">12/10/2023</span><span class="l c7" style="left:1457.4px">Dwell time</span><span class="v c7" style="left:1457.4px">86 Days</span><svg width="10" height="14" viewBox="0 0 10 14"><path d="M3 2.600l4.300 4.300L3 11.200" fill="none" stroke="#d2d2d2" stroke-width="1.200" stroke-linecap="round" stroke-linejoin="round"/></svg></div>
<div id="sb"><div class="thumb"></div>
<svg class="abs" style="left:0;top:0" width="17" height="17" viewBox="0 0 17 17"><path d="M4.800 10.500L8.500 6.500l3.700 4z" fill="#a3a3a3"/></svg>
<svg class="abs" style="left:0;top:894px" width="17" height="17" viewBox="0 0 17 17"><path d="M4.800 6.500L8.500 10.500l3.700-4z" fill="#505050"/></svg>
</div>
</body>
</html>
